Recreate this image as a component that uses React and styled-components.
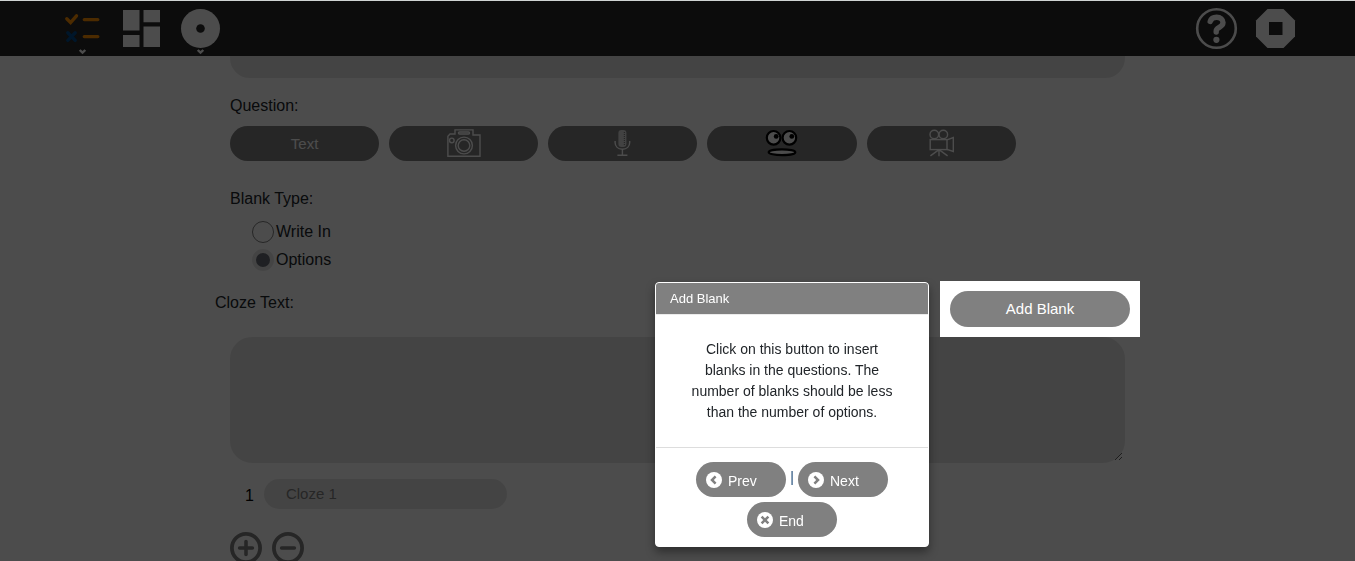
import React from "react";
import styled, { createGlobalStyle } from "styled-components";

const GlobalStyle = createGlobalStyle`
  *, *::before, *::after { box-sizing: border-box; }
  body {
    margin: 0;
    background: #fff;
    color: #212529;
    font-family: "Liberation Sans", Arial, sans-serif;
    font-size: 16px;
    line-height: 24px;
  }
  button, input, textarea { font-family: inherit; margin: 0; }
  svg { display: block; }
`;

const Page = styled.div`
  display: flex;
  flex-direction: column;
  height: 100vh;
  overflow: hidden;
  border-top: 1px solid #d0d4d3;
`;

const Toolbar = styled.header`
  display: flex;
  justify-content: space-between;
  flex: none;
  padding: 0 52px 0 55px;
  background: #282828;
`;

const ToolGroup = styled.div`
  display: flex;
  gap: 4px;
`;

const ToolButton = styled.button`
  width: 55px;
  height: 55px;
  padding: 0;
  border: 0;
  background: transparent;
`;

const Content = styled.main`
  flex: 1;
  min-height: 0;
  overflow: hidden;
`;

const Form = styled.form`
  width: 100%;
  max-width: 925px;
  margin: 0 auto;
  padding: 0 15px;
`;

const TextArea = styled.textarea`
  display: block;
  width: 100%;
  height: ${(p) => p.$height}px;
  padding: ${(p) => (p.$tail ? "0" : "10px 20px")};
  border: 2px solid #e5e5e5;
  border-radius: ${(p) => (p.$tail ? "0 0 20px 20px" : "22px")};
  background: #e5e5e5;
  font-size: 15px;
  resize: ${(p) => (p.$tail ? "none" : "vertical")};
`;

const Group = styled.fieldset`
  margin: 0;
  padding: ${(p) => p.$top}px 0 0;
  border: 0;
  min-width: 0;
`;

const Legend = styled.legend`
  float: left;
  width: 100%;
  padding: 0;
`;

const MediaRow = styled.div`
  clear: both;
  display: flex;
  gap: 10px;
  padding-top: 8px;
`;

const PillButton = styled.button`
  display: flex;
  align-items: center;
  justify-content: center;
  width: ${(p) => p.$width};
  height: ${(p) => p.$height || 35}px;
  padding: 0 0 1px;
  border: 0;
  border-radius: 18px;
  background: #808080;
  color: #fff;
  font-size: 15px;
`;

const RadioList = styled.div`
  clear: both;
  padding: 7px 0 7px 22px;
`;

const RadioLabel = styled.label`
  display: flex;
  align-items: center;
  gap: 2px;
  height: 28px;
`;

const Radio = styled.input`
  appearance: none;
  width: 22px;
  height: 22px;
  border: 1px solid #808080;
  border-radius: 50%;
  background: #fff;
  &:checked {
    border: 4px solid #e5e5e5;
    background: #6a6d76;
  }
`;

const ClozeRow = styled.div`
  display: flex;
  justify-content: space-between;
  align-items: flex-start;
  margin: 0 -15px;
`;

const ClozeLabel = styled.label`
  padding-top: 10px;
`;

const Highlight = styled.div`
  position: relative;
  z-index: 2;
  padding: 10px;
  background: #fff;
`;

const OptionRow = styled.div`
  display: flex;
  align-items: center;
  gap: 10px;
  padding: 16px 0 0 15px;
`;

const OptionInput = styled.input`
  width: 243px;
  height: 30px;
  padding: 0 22px 2px;
  border: 0;
  border-radius: 15px;
  background: #e5e5e5;
  font-size: 15px;
  &::placeholder { color: #808080; opacity: 1; }
`;

const OptionNumber = styled.label`
  padding-top: 4px;
  color: #000;
`;

const CountRow = styled.div`
  display: flex;
  gap: 10px;
  padding-top: 23px;
`;

const RoundButton = styled.button`
  width: 32px;
  height: 32px;
  padding: 0;
  border: 0;
  background: transparent;
`;

const Backdrop = styled.div`
  position: fixed;
  inset: 1px 0 0;
  z-index: 1;
  background: rgba(0, 0, 0, 0.7);
`;

const Popover = styled.section`
  position: absolute;
  top: 1px;
  right: calc(100% + 11px);
  width: 274px;
  border: 1px solid #fff;
  border-radius: 4px;
  background: #fff;
  box-shadow: 0 5px 10px rgba(0, 0, 0, 0.4);
`;

const PopoverTitle = styled.h3`
  margin: 0;
  padding: 6px 14px 5px;
  border-bottom: 1px solid #ebebeb;
  border-radius: 3px 3px 0 0;
  background: #808080;
  color: #fff;
  font-size: 13px;
  font-weight: 400;
  line-height: 20px;
`;

const PopoverText = styled.p`
  margin: 0;
  padding: 24px 30px;
  font-size: 14px;
  line-height: 21px;
  text-align: center;
`;

const PopoverNav = styled.div`
  display: flex;
  flex-wrap: wrap;
  justify-content: center;
  gap: 5px 4px;
  padding: 14px 10px 9px;
  border-top: 1px solid #ddd;
`;

const NavButton = styled.button`
  display: flex;
  align-items: center;
  gap: 6px;
  width: 90px;
  height: 35px;
  padding: 2px 10px 0;
  border: 0;
  border-radius: 18px;
  background: #808080;
  color: #fff;
  font-size: 14px;
`;

const NavGlyph = styled.svg`
  margin-bottom: 2px;
`;

const Separator = styled.span`
  width: 4px;
  text-align: center;
  line-height: 30px;
  font-size: 14px;
  color: #1c4a78;
`;

const Caret = () => (
  <path d="M24.7 49L27.5 51.7L30.3 49" fill="none" stroke="#fff" strokeWidth="2.4" />
);

const ToolIcon = ({ children }) => (
  <svg width="55" height="55" viewBox="0 0 55 55" aria-hidden="true">{children}</svg>
);

const NavIcon = ({ d }) => (
  <NavGlyph width="16" height="16" viewBox="0 0 16 16" aria-hidden="true">
    <circle cx="8" cy="8" r="8" fill="#fff" />
    <path d={d} fill="none" stroke="#808080" strokeWidth="2.5" />
  </NavGlyph>
);

const CameraIcon = () => (
  <svg width="34" height="28" viewBox="0 0 34 28" fill="none" stroke="#fff" strokeWidth="1.4" aria-hidden="true">
    <path d="M.9 27.2V7.2L3 5H8V.9H26V6H33V27.2Z" />
    <rect x="11.5" y="3" width="11" height="2" rx="1" />
    <circle cx="4.8" cy="11.4" r="2.3" />
    <circle cx="17" cy="16.5" r="8.4" />
    <circle cx="17" cy="16.5" r="5.8" />
  </svg>
);

const MicIcon = () => (
  <svg width="18" height="28" viewBox="0 0 18 28" fill="none" aria-hidden="true">
    <rect x="4.4" y="1" width="8" height="17" rx="3" fill="#ddd" />
    <path d="M10.4 3V17" stroke="#808080" strokeWidth="1.2" strokeDasharray="1 1" />
    <path d="M1.1 12V13.5C1.1 17.5 4 20.2 8.4 20.2S15.7 17.5 15.7 13.5V12M8.4 20.2V26M3.4 26.3H13.4" stroke="#fff" strokeWidth="1.4" />
  </svg>
);

const FaceIcon = () => (
  <svg width="34" height="28" viewBox="0 0 34 28" fill="#fff" stroke="#000" strokeWidth="2.2" aria-hidden="true">
    <circle cx="8.6" cy="8.8" r="6.8" />
    <circle cx="24.4" cy="8.8" r="6.8" />
    <circle cx="11.2" cy="7.4" r="2.4" fill="#000" stroke="none" />
    <circle cx="26.8" cy="7.4" r="2.4" fill="#000" stroke="none" />
    <ellipse cx="17" cy="23.2" rx="13.3" ry="2.9" />
  </svg>
);

const FilmIcon = () => (
  <svg width="26" height="28" viewBox="0 0 26 28" fill="none" stroke="#fff" strokeWidth="1.4" aria-hidden="true">
    <circle cx="6.3" cy="5.5" r="4.3" />
    <circle cx="15.3" cy="5.5" r="4.3" />
    <rect x="2.2" y="10.6" width="16.8" height="10" />
    <path d="M19 10.9L25.3 8.5V22.5L19 20.3M11 20.6V27.3M11 20.6L2.4 26.9M11 20.6L19.6 26.9" />
  </svg>
);

export default function App() {
  return (
    <Page>
      <GlobalStyle />
      <Toolbar>
        <ToolGroup>
          <ToolButton aria-label="Exercises">
            <ToolIcon>
              <g fill="none" strokeLinecap="round" strokeWidth="3.4">
                <path d="M11.8 17.8L15.6 21.6L21.5 14.8M29.3 18.6H42.8M29.3 35.6H42.8" stroke="#ff8f00" />
                <path d="M12.8 31.8L20.2 39.4M20.2 31.8L12.8 39.4" stroke="#004b8d" />
              </g>
              <Caret />
            </ToolIcon>
          </ToolButton>
          <ToolButton aria-label="Templates">
            <ToolIcon>
              <path d="M9 9H25.5V29.5H9ZM9 34H25.5V46H9ZM29.5 9H46V21.3H29.5ZM29.5 25.5H46V46H29.5Z" fill="#fff" />
            </ToolIcon>
          </ToolButton>
          <ToolButton aria-label="Network">
            <ToolIcon>
              <circle cx="27.5" cy="27.5" r="19.5" fill="#fff" />
              <circle cx="27.5" cy="27.5" r="4.3" fill="#282828" />
              <Caret />
            </ToolIcon>
          </ToolButton>
        </ToolGroup>
        <ToolGroup>
          <ToolButton aria-label="Help">
            <ToolIcon>
              <g fill="none" stroke="#fff">
                <circle cx="27.5" cy="27.5" r="19.3" strokeWidth="2.6" />
                <path d="M21.2 20.4C22 17.6 24.4 16.2 27.6 16.2C31.4 16.2 34 18.4 34 21.6C34 26.6 27.2 26 27.2 30V31" strokeWidth="5.4" strokeLinecap="round" />
              </g>
              <circle cx="27.4" cy="38.8" r="3.1" fill="#fff" />
            </ToolIcon>
          </ToolButton>
          <ToolButton aria-label="Stop">
            <ToolIcon>
              <path d="M19.5 8H35.5L47 19.5V35.5L35.5 47H19.5L8 35.5V19.5Z" fill="#fff" />
              <path d="M21 21H34.5V34H21Z" fill="#282828" />
            </ToolIcon>
          </ToolButton>
        </ToolGroup>
      </Toolbar>

      <Content>
        <Form onSubmit={(e) => e.preventDefault()}>
          <TextArea $height={22} $tail aria-label="Title" />

          <Group $top={16}>
            <Legend>Question:</Legend>
            <MediaRow>
              <PillButton type="button" $width="calc(100% / 6)">Text</PillButton>
              <PillButton type="button" $width="calc(100% / 6)" aria-label="Image"><CameraIcon /></PillButton>
              <PillButton type="button" $width="calc(100% / 6)" aria-label="Audio"><MicIcon /></PillButton>
              <PillButton type="button" $width="calc(100% / 6)" aria-label="Speech"><FaceIcon /></PillButton>
              <PillButton type="button" $width="calc(100% / 6)" aria-label="Video"><FilmIcon /></PillButton>
            </MediaRow>
          </Group>

          <Group $top={26}>
            <Legend>Blank Type:</Legend>
            <RadioList>
              <RadioLabel>
                <Radio type="radio" name="blank-type" />
                Write In
              </RadioLabel>
              <RadioLabel>
                <Radio type="radio" name="blank-type" defaultChecked />
                Options
              </RadioLabel>
            </RadioList>
          </Group>

          <ClozeRow>
            <ClozeLabel htmlFor="cloze-text">Cloze Text:</ClozeLabel>
            <Highlight>
              <PillButton type="button" $width="180px" $height={36}>Add Blank</PillButton>
              <Popover role="dialog" aria-labelledby="tour-title">
                <PopoverTitle id="tour-title">Add Blank</PopoverTitle>
                <PopoverText>
                  Click on this button to insert blanks in the questions. The number of blanks should be less than the number of options.
                </PopoverText>
                <PopoverNav>
                  <NavButton type="button"><NavIcon d="M9.6 4.4L6 8L9.6 11.6" />Prev</NavButton>
                  <Separator>|</Separator>
                  <NavButton type="button"><NavIcon d="M6.4 4.4L10 8L6.4 11.6" />Next</NavButton>
                  <NavButton type="button"><NavIcon d="M4.6 4.6L11.4 11.4M11.4 4.6L4.6 11.4" />End</NavButton>
                </PopoverNav>
              </Popover>
            </Highlight>
          </ClozeRow>
          <TextArea id="cloze-text" $height={126} />

          <OptionRow>
            <OptionNumber htmlFor="cloze-1">1</OptionNumber>
            <OptionInput id="cloze-1" type="text" placeholder="Cloze 1" />
          </OptionRow>

          <CountRow>
            <RoundButton type="button" aria-label="Add option">
              <svg width="32" height="32" viewBox="0 0 32 32" fill="none" stroke="#808080" strokeWidth="3.8" strokeLinecap="round">
                <circle cx="16" cy="16" r="14.1" />
                <path d="M16 9.6V22.4M9.6 16H22.4" strokeWidth="3.6" />
              </svg>
            </RoundButton>
            <RoundButton type="button" aria-label="Remove option">
              <svg width="32" height="32" viewBox="0 0 32 32" fill="none" stroke="#808080" strokeWidth="3.8" strokeLinecap="round">
                <circle cx="16" cy="16" r="14.1" />
                <path d="M9.6 16H22.4" strokeWidth="3.6" />
              </svg>
            </RoundButton>
          </CountRow>
        </Form>
      </Content>
      <Backdrop />
    </Page>
  );
}
